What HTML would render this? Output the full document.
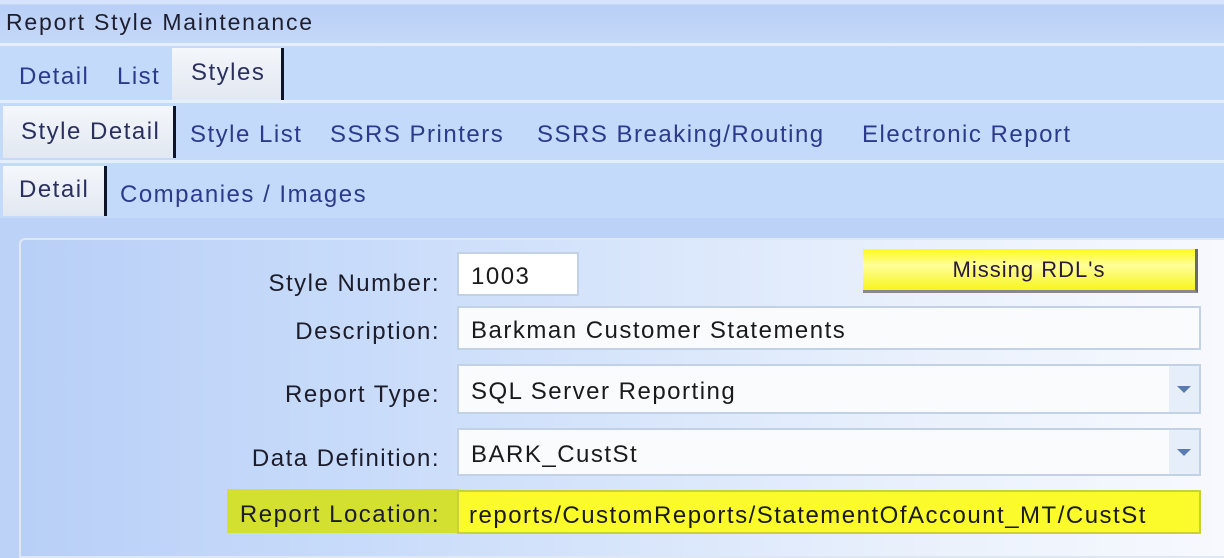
<!DOCTYPE html>
<html><head><style>
*{margin:0;padding:0;box-sizing:border-box}
body{width:1224px;height:548px;overflow:hidden;background:#bcd2f7;font-family:"Liberation Sans",Arial,sans-serif;position:relative}
.abs{position:absolute}
.title{left:0;top:0;width:1224px;height:43px;background:linear-gradient(#d6e4fb 0,#d6e4fb 4px,#b9cff6 5px,#c4d8f8 100%);border-top:0}
.title span{position:absolute;left:6px;top:9px;font-size:23px;letter-spacing:1.8px;color:#1e1e2e}
.row{left:0;width:1224px;background:#c3dafb;border-top:3px solid #e4eefc}
.tab{position:absolute;font-size:24px;letter-spacing:1.5px;color:#2d3a8c;white-space:nowrap}
.sel{position:absolute;background:linear-gradient(#f4f7fb,#e2e8f1);border-right:3px solid #0d1428}
.panel{left:19px;top:238px;width:1210px;height:320px;border:2px solid #dfe7f3;border-radius:6px 6px 0 0;background:linear-gradient(90deg,#b8cff7 0%,#c9dcfa 30%,#eaf1fc 75%,#f7f9fe 100%)}
.lbl{position:absolute;right:784px;font-size:24px;letter-spacing:1.5px;color:#1c1c2a;text-align:right;white-space:nowrap}
.inp{position:absolute;left:457px;background:#fafbfd;border:2px solid #c3d1e6;font-size:24px;letter-spacing:1.5px;color:#1a1a1a;padding-left:12px;white-space:nowrap}
.arr{position:absolute;right:0;top:0;bottom:0;width:30px;background:#e6eefa}
.arr:after{content:"";position:absolute;left:8px;top:50%;margin-top:-3px;border-left:7px solid transparent;border-right:7px solid transparent;border-top:7px solid #5a7bb0}
</style></head><body>
<div class="abs title"><span>Report Style Maintenance</span></div>
<div class="abs row" style="top:43px;height:57px">
 <div class="sel" style="left:172px;top:2px;width:112px;height:52px"></div>
 <div class="tab" style="left:19px;top:17px">Detail</div>
 <div class="tab" style="left:117px;top:17px">List</div>
 <div class="tab" style="left:191px;top:13px;color:#2a2f5e">Styles</div>
</div>
<div class="abs row" style="top:100px;height:60px">
 <div class="sel" style="left:3px;top:3px;width:173px;height:52px"></div>
 <div class="tab" style="left:21px;top:15px;color:#2a2f5e">Style Detail</div>
 <div class="tab" style="left:190px;top:18px">Style List</div>
 <div class="tab" style="left:330px;top:18px">SSRS Printers</div>
 <div class="tab" style="left:537px;top:18px">SSRS Breaking/Routing</div>
 <div class="tab" style="left:862px;top:18px">Electronic Report</div>
</div>
<div class="abs row" style="top:160px;height:58px">
 <div class="sel" style="left:3px;top:3px;width:104px;height:50px"></div>
 <div class="tab" style="left:19px;top:13px;color:#2a2f5e">Detail</div>
 <div class="tab" style="left:120px;top:18px">Companies / Images</div>
</div>
<div class="abs panel"></div>
<div class="lbl" style="top:270px">Style Number:</div>
<div class="inp" style="top:252px;width:122px;height:44px;background:#fff;padding-top:9px">1003</div>
<div class="abs" style="left:863px;top:249px;width:335px;height:44px;background:linear-gradient(#fffb1a 0%,#fffe9a 40%,#f7f51c 100%);border-right:3px solid #6a6a6a;border-bottom:3px solid #8a8a8a;font-size:22px;letter-spacing:1px;text-align:center;padding-top:8px;color:#2a1a3a">Missing RDL's</div>
<div class="lbl" style="top:318px">Description:</div>
<div class="inp" style="top:306px;width:744px;height:44px;padding-top:9px">Barkman Customer Statements</div>
<div class="lbl" style="top:381px">Report Type:</div>
<div class="inp" style="top:364px;width:744px;height:50px;padding-top:12px">SQL Server Reporting<div class="arr"></div></div>
<div class="lbl" style="top:445px">Data Definition:</div>
<div class="inp" style="top:428px;width:744px;height:48px;padding-top:11px">BARK_CustSt<div class="arr"></div></div>
<div class="abs" style="left:227px;top:489px;width:232px;height:44px;background:#d3e030"></div>
<div class="lbl" style="top:501px">Report Location:</div>
<div class="inp" style="top:490px;width:744px;height:44px;background:#fbfb2c;border-color:#c7d238;padding-left:10px;padding-top:10px">reports/CustomReports/StatementOfAccount_MT/CustSt</div>
</body></html>
